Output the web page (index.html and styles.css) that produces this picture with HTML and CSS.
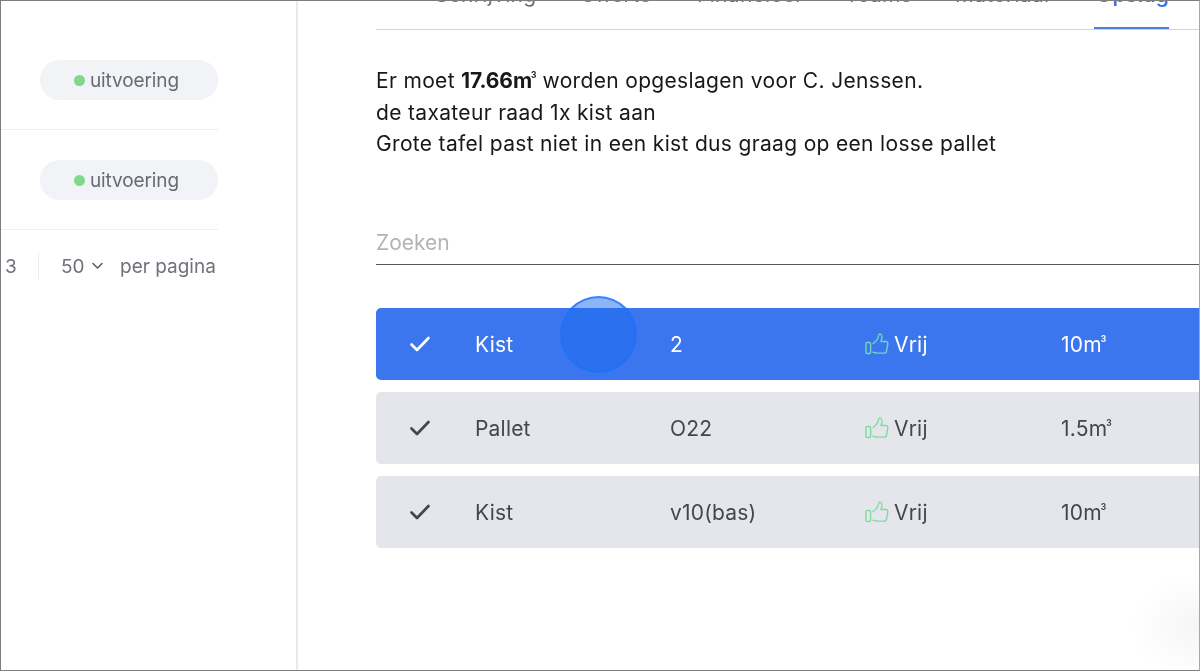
FILE: index.html
```html
<!DOCTYPE html>
<html lang="nl">
<head>
<meta charset="utf-8">
<title>Opslag</title>
<link rel="stylesheet" href="styles.css">
</head>
<body>
<svg class="defs" width="0" height="0" aria-hidden="true">
  <symbol id="thumb" viewBox="0 0 24 22">
    <rect x="1" y="9.5" width="4.6" height="11" rx="1" fill="none" stroke="currentColor" stroke-width="1.4"/>
    <path d="M8 10.5c2.4-1.600 4.600-3.800 5.200-6.600.2-1.200.3-2.900 1.600-2.900 1.700 0 2.300 2 2.100 3.800-.1 1.300-.6 2.500-1 3.700h4.800c1.400 0 2.300 1.100 2.100 2.400l-1.200 7c-.2 1.400-1.100 2.200-2.500 2.200h-6.600c-2 0-3.200-.9-4.500-.9" fill="none" stroke="currentColor" stroke-width="1.4" stroke-linecap="round" stroke-linejoin="round"/>
  </symbol>
  <symbol id="check" viewBox="0 0 22 18">
    <path d="M2.500 9.500l5.500 5.500L19.500 3" fill="none" stroke="currentColor" stroke-width="2.700" stroke-linecap="round" stroke-linejoin="round"/>
  </symbol>
</svg>
<div class="app">
  <aside class="side">
    <div class="side-row"><span class="pill"><i class="dot"></i>uitvoering</span></div>
    <div class="side-row"><span class="pill"><i class="dot"></i>uitvoering</span></div>
    <div class="pager">
      <span class="pg-num">3</span>
      <span class="pg-sep"></span>
      <span class="pg-size">50</span>
      <svg class="pg-chev" viewBox="0 0 12 8" width="13" height="8"><path d="M1.500 1.500L6 6l4.500-4.500" fill="none" stroke="currentColor" stroke-width="1.600" stroke-linecap="round" stroke-linejoin="round"/></svg>
      <span class="pg-label">per pagina</span>
    </div>
  </aside>
  <main class="main">
    <nav class="tabs">
      <span class="tab t1">Schrijving</span>
      <span class="tab t2">Offerte</span>
      <span class="tab t3">Financieel</span>
      <span class="tab t4">Teams</span>
      <span class="tab t5">Materiaal</span>
      <span class="tab active">Opslag</span>
    </nav>
    <div class="note">
      <p>Er moet <b>17.66m<sup>3</sup></b> worden opgeslagen voor C. Jenssen.</p>
      <p>de taxateur raad 1x kist aan</p>
      <p>Grote tafel past niet in een kist dus graag op een losse pallet</p>
    </div>
    <div class="search">Zoeken</div>
    <div class="list">
      <div class="row selected">
        <svg class="check"><use href="#check"/></svg>
        <span>Kist</span><span>2</span>
        <span class="free"><svg class="thumb"><use href="#thumb"/></svg>Vrij</span>
        <span>10m<sup>3</sup></span>
        <span class="touch"></span>
      </div>
      <div class="row">
        <svg class="check"><use href="#check"/></svg>
        <span>Pallet</span><span>O22</span>
        <span class="free"><svg class="thumb"><use href="#thumb"/></svg>Vrij</span>
        <span>1.5m<sup>3</sup></span>
      </div>
      <div class="row">
        <svg class="check"><use href="#check"/></svg>
        <span>Kist</span><span>v10(bas)</span>
        <span class="free"><svg class="thumb"><use href="#thumb"/></svg>Vrij</span>
        <span>10m<sup>3</sup></span>
      </div>
    </div>
  </main>
  <div class="corner-shade"></div>
</div>
</body>
</html>
```
FILE: styles.css
```css
* { box-sizing: border-box; }
html, body { margin: 0; height: 100%; overflow: hidden; background: #fff; }
body { font-family: Inter, "Liberation Sans", sans-serif; color: #17171c; }
.defs { position: absolute; }
.app {
  position: relative;
  display: flex;
  width: 1200px;
  height: 671px;
  overflow: hidden;
  border: 1px solid #7d7d80;
  border-right-color: #a8a8aa;
  background: #fff;
  filter: blur(.35px);
}
.side {
  width: 297px;
  flex: none;
  border-right: 2px solid #e9e9eb;
  padding-top: 29px;
}
.side-row {
  width: 217px;
  height: 100px;
  padding: 30px 0 0 39px;
  border-bottom: 1px solid #eeeef0;
}
.pill {
  display: flex;
  align-items: center;
  justify-content: center;
  gap: 5px;
  height: 40px;
  padding-right: 5px;
  border-radius: 20px;
  background: #f2f3f6;
  color: #686a75;
  font-size: 19px;
  letter-spacing: -.1px;
}
.dot { width: 11px; height: 11px; border-radius: 50%; background: #7fd88b; }
.pager {
  display: flex;
  align-items: center;
  height: 26px;
  margin-top: 23px;
  padding-left: 4px;
  width: 217px;
  color: #6f717b;
  font-size: 19px;
  white-space: nowrap;
}
.pg-num { width: 33px; }
.pg-sep { width: 1px; height: 26px; background: #eeeef0; margin-right: 22px; }
.pg-size { width: 30px; }
.pg-chev { margin-right: 16px; color: #5d5f69; }
.main {
  flex: 1;
  min-width: 0;
  padding-left: 78px;
}
.tabs {
  position: relative;
  display: flex;
  align-items: flex-end;
  height: 29px;
  border-bottom: 1px solid #d6d6d9;
  padding-bottom: 22px;
  color: #6f717b;
  font-size: 21px;
  letter-spacing: .3px;
  white-space: nowrap;
}
.tab { display: block; line-height: 24px; }
.t1 { margin-left: 59px; width: 145px; }
.t2 { width: 117px; }
.t3 { width: 148px; }
.t4 { width: 110px; }
.t5 { width: 141px; }
.active {
  position: relative;
  color: #3a76e8;
  font-weight: 600;
}
.active::after {
  content: "";
  position: absolute;
  left: -2px;
  width: 75px;
  top: 44px;
  height: 2px;
  background: #4a80e0;
}
.note {
  margin-top: 35px;
  font-size: 21px;
  line-height: 31.500px;
  letter-spacing: .33px;
  white-space: nowrap;
}
.note p { margin: 0; }
.note b { font-weight: 700; letter-spacing: -.1px; }
sup { font-size: 40%; line-height: 0; vertical-align: baseline; position: relative; top: -1.150em; margin-left: -1px; font-weight: 700; }
.search {
  margin-top: 64px;
  height: 41px;
  line-height: 38px;
  border-bottom: 1px solid #55555b;
  color: #b3b3b8;
  font-size: 21px;
}
.list {
  display: flex;
  flex-direction: column;
  gap: 12px;
  margin-top: 43px;
}
.row {
  position: relative;
  display: grid;
  grid-template-columns: 99px 195px 195px 196px 1fr;
  align-items: center;
  height: 72px;
  width: 840px;
  padding-top: 1px;
  border-radius: 5px;
  background: #e5e6eb;
  color: #44454d;
  font-size: 21px;
  letter-spacing: .2px;
  white-space: nowrap;
}
.row.selected { background: #3b76ee; color: #fff; }
.check { width: 22px; height: 18px; margin-left: 33px; }
.free { display: flex; align-items: center; gap: 5px; }
.thumb { width: 24px; height: 22px; color: #82dba0; }
.selected .thumb { color: #6fd6bd; }
.touch {
  position: absolute;
  left: 184px;
  top: -12px;
  width: 77px;
  height: 77px;
  border-radius: 50%;
  background: rgba(28, 105, 238, .5);
  border: 2px solid rgba(28, 115, 250, .75);
}
.corner-shade {
  position: absolute;
  right: 0;
  top: 570px;
  width: 70px;
  height: 100px;
  background: radial-gradient(ellipse at 100% 55%, rgba(0, 0, 0, .04), rgba(0, 0, 0, 0) 70%);
}
```
